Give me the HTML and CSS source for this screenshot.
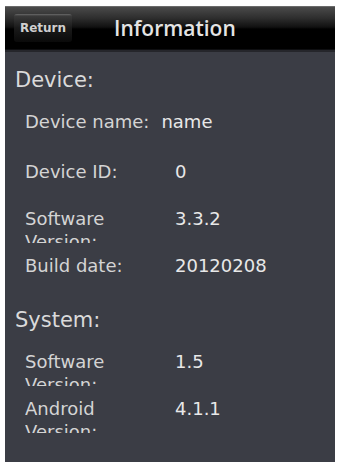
FILE: index.html
```html
<!DOCTYPE html>
<html>
<head>
<meta charset="utf-8">
<link rel="stylesheet" href="styles.css">
</head>
<body>
<div class="screen">
  <header class="bar">
    <button class="bar__back">Return</button>
    <h1 class="bar__title">Information</h1>
  </header>
  <main class="content">
    <section class="section">
      <h2 class="section__title">Device:</h2>
      <div class="row row--inline">
        <span class="row__label">Device name:</span>
        <span class="row__value">name</span>
      </div>
      <div class="row">
        <span class="row__label">Device ID:</span>
        <span class="row__value">0</span>
      </div>
      <div class="row">
        <span class="row__label">Software Version:</span>
        <span class="row__value">3.3.2</span>
      </div>
      <div class="row">
        <span class="row__label">Build date:</span>
        <span class="row__value">20120208</span>
      </div>
    </section>
    <section class="section">
      <h2 class="section__title">System:</h2>
      <div class="row">
        <span class="row__label">Software Version:</span>
        <span class="row__value">1.5</span>
      </div>
      <div class="row">
        <span class="row__label">Android Version:</span>
        <span class="row__value">4.1.1</span>
      </div>
    </section>
  </main>
</div>
</body>
</html>
```

FILE: styles.css
```css
html, body {
  margin: 0;
  padding: 0;
  background: #ffffff;
}

body {
  font-family: "DejaVu Sans", "Open Sans", sans-serif;
}

.screen {
  margin: 6px 2px 3px 5px;
  width: 330px;
  height: 456px;
  background: #3b3d45;
  display: flex;
  flex-direction: column;
  overflow: hidden;
}

.bar {
  height: 44px;
  flex: none;
  display: flex;
  align-items: center;
  background: linear-gradient(to bottom, #8a8a8a 0px, #4a4a4a 1px, #2e2e2e 12px, #111 21px, #000 23px, #000 43px, #1c1d22 44px);
  border-bottom: 2px solid #25262b;
}

.bar__back {
  margin-left: 9px;
  width: 58px;
  height: 28px;
  padding: 0;
  border: none;
  border-radius: 3px;
  background: linear-gradient(to bottom, #6a6a6a 0px, #3a3a3a 2px, #1a1a1a 14px, #0a0a0a 28px);
  color: #cfcfcf;
  font-family: "DejaVu Sans", sans-serif;
  font-weight: bold;
  font-size: 12px;
  line-height: 28px;
  text-align: center;
}

.bar__title {
  margin: 0 0 0 42px;
  color: #e4e4e4;
  font-family: "Open Sans", "DejaVu Sans", sans-serif;
  font-weight: 600;
  font-size: 21px;
  line-height: 28px;
}

.content {
  padding: 14px 0 0 10px;
}

.section + .section {
  margin-top: 5px;
}

.section__title {
  margin: 0 0 16px 0;
  font-weight: normal;
  font-size: 21px;
  line-height: 28px;
  color: #dadada;
}

.row {
  display: flex;
  height: 47px;
  padding-left: 10px;
  font-size: 18px;
  line-height: 23px;
}

.row__label {
  flex: none;
  width: 140px;
  margin-right: 10px;
  max-height: 36px;
  overflow: hidden;
  color: #d4d4d4;
}

.row__value {
  color: #e8e8e8;
}

.row--inline {
  height: 50px;
}

.row--inline .row__label {
  width: auto;
  margin-right: 12px;
}
```
